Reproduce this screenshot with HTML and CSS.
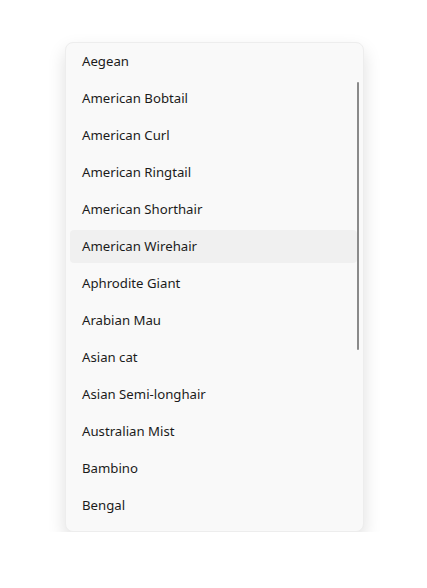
FILE: index.html
```html
<!DOCTYPE html>
<html>
<head>
<meta charset="utf-8">
<link rel="stylesheet" href="styles.css">
</head>
<body>
<div class="card">
  <ul class="list">
    <li class="item">Aegean</li>
    <li class="item">American Bobtail</li>
    <li class="item">American Curl</li>
    <li class="item">American Ringtail</li>
    <li class="item">American Shorthair</li>
    <li class="item hover">American Wirehair</li>
    <li class="item">Aphrodite Giant</li>
    <li class="item">Arabian Mau</li>
    <li class="item">Asian cat</li>
    <li class="item">Asian Semi-longhair</li>
    <li class="item">Australian Mist</li>
    <li class="item">Bambino</li>
    <li class="item">Bengal</li>
  </ul>
  <div class="scrollbar"></div>
</div>
</body>
</html>
```
FILE: styles.css
```css
html, body {
  margin: 0;
  padding: 0;
  background: #ffffff;
}
body {
  font-family: "Segoe UI", "Noto Sans", "Open Sans", sans-serif;
  font-size: 13.2px;
  color: #1b1b1b;
}
.card {
  position: relative;
  box-sizing: border-box;
  margin: 42px 0 0 65px;
  width: 299px;
  height: 490px;
  background: #f9f9f9;
  border: 1px solid #ededed;
  border-radius: 8px;
  box-shadow: 0 8px 18px rgba(0, 0, 0, 0.13);
  overflow: hidden;
}
.list {
  list-style: none;
  margin: 0;
  padding: 2px 6px 0 4px;
  display: flex;
  flex-direction: column;
  gap: 4px;
}
.item {
  height: 33px;
  line-height: 32px;
  padding-left: 12px;
  border-radius: 4px;
  white-space: nowrap;
}
.item.hover {
  background: #f0f0f0;
}
.scrollbar {
  position: absolute;
  left: 291px;
  top: 39px;
  width: 2px;
  height: 268px;
  border-radius: 1px;
  background: #8a8a8a;
}
```
